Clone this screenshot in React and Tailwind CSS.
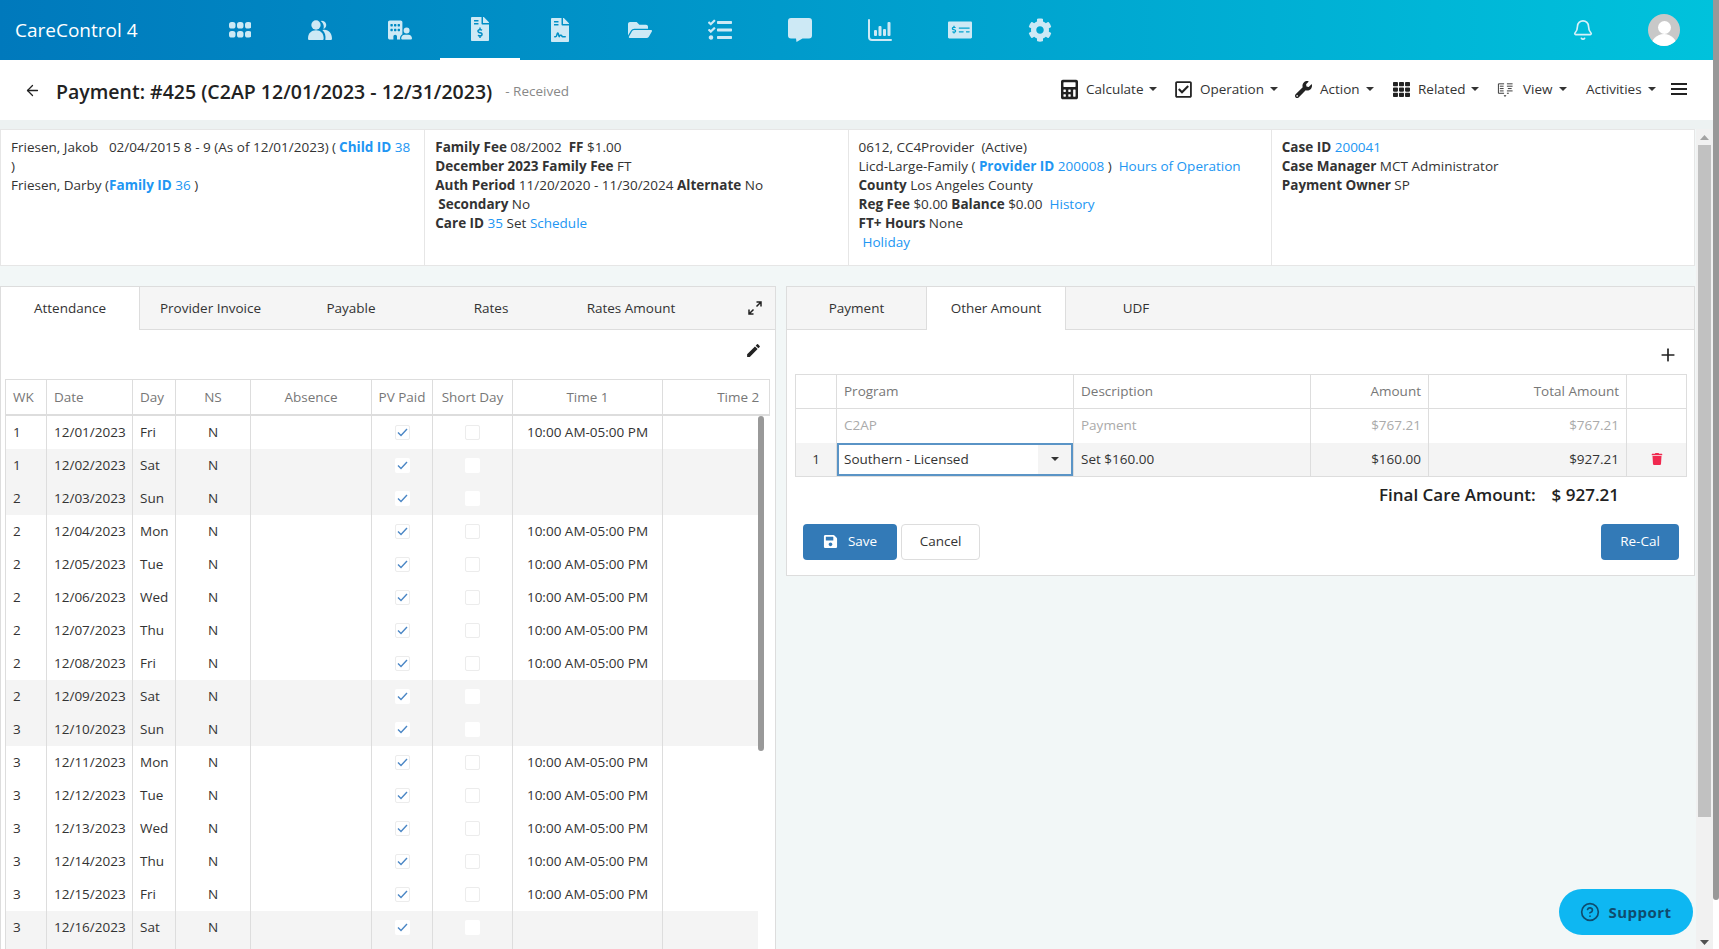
import React from 'react';
import { ArrowLeft, Bell, CircleHelp, Plus } from 'lucide-react';
import {
  FaCalculator, FaCog, FaFileContract, FaFileInvoiceDollar, FaFolderOpen,
  FaMoneyCheckAlt, FaRegCheckSquare, FaSave, FaTasks, FaTh, FaTrash, FaWrench,
} from 'react-icons/fa';
import { FaBuildingUser } from 'react-icons/fa6';
import { MdEdit } from 'react-icons/md';

const AppsIcon = () => (
  <svg width="22" height="16" viewBox="0 0 22 16" fill="currentColor">
    {[0, 8, 16].map((x) => [0, 9].map((y) => <rect key={`${x}-${y}`} x={x} y={y} width="6.500" height="6.500" rx="2.600" />))}
  </svg>
);

const PeopleIcon = () => (
  <svg width="24" height="20" viewBox="0 0 72 60" fill="currentColor">
    <circle cx="24" cy="15" r="14" />
    <path d="M0 56c0-16 10-25 24-25s23 9 23 25c0 2-2 4-4 4H4c-2 0-4-2-4-4z" />
    <path d="M38 3a11 11 0 1 1 8 24c3-7 1-18-8-24z" />
    <path d="M43 30c16-4 29 7 29 26 0 2-2 4-4 4H52c2-12-1-23-9-30z" />
  </svg>
);

const BubbleIcon = () => (
  <svg width="24" height="24" viewBox="0 0 24 24" fill="currentColor">
    <path d="M3 0h18a3 3 0 0 1 3 3v14.500a3 3 0 0 1-3 3h-6.500L8.500 24l-.5-3.500H3a3 3 0 0 1-3-3V3a3 3 0 0 1 3-3z" />
  </svg>
);

const BarsIcon = () => (
  <svg width="24" height="22" viewBox="0 0 24 22" fill="currentColor">
    <path d="M1 0a1 1 0 0 1 1 1v17a2 2 0 0 0 2 2h19a1 1 0 0 1 0 2H4a4 4 0 0 1-4-4V1a1 1 0 0 1 1-1z" />
    <rect x="6" y="11" width="3" height="6" rx="1" />
    <rect x="10.500" y="7" width="3" height="10" rx="1" />
    <rect x="15" y="10" width="3" height="7" rx="1" />
    <rect x="19.500" y="3" width="3" height="14" rx="1" />
  </svg>
);

const ViewIcon = () => (
  <svg width="18" height="17" viewBox="0 0 18 17" fill="none" stroke="#333" strokeWidth="1">
    <path d="M1.500 2.500h6M1.500 2.500v10h6M3 5h4M3 7.500h4M3 10h4" />
    <path d="M10.500 2.500h6M10.500 5h6M11.500 7.500h4M10.500 10h6M10.500 12.500h2" />
    <path d="M7 14.500h3l-1.500 2z" fill="#333" stroke="none" />
  </svg>
);

const ExpandIcon = () => (
  <svg width="14" height="14" viewBox="0 0 14 14" fill="none" stroke="#222" strokeWidth="1.500">
    <path d="M8.500 1h4.500v4.500M13 1L8.500 5.500" />
    <path d="M5.500 13H1V8.500M1 13l4.500-4.500" />
  </svg>
);

const Caret = ({ className = 'text-[#333]' }) => (
  <svg width="8" height="4" viewBox="0 0 8 4" fill="currentColor" className={className}>
    <path d="M0 0h8L4 4z" />
  </svg>
);

const navIcons = [
  <AppsIcon />,
  <PeopleIcon />,
  <FaBuildingUser size={24} />,
  <FaFileInvoiceDollar size={24} />,
  <FaFileContract size={24} />,
  <FaFolderOpen size={24} />,
  <FaTasks size={24} />,
  <BubbleIcon />,
  <BarsIcon />,
  <FaMoneyCheckAlt size={24} />,
  <FaCog size={24} />,
];

const toolbar = [
  { label: 'Calculate', icon: <FaCalculator size={21} />, mr: 'mr-[8px]', w: 'w-[114px]' },
  { label: 'Operation', icon: <FaRegCheckSquare size={19} />, mr: 'mr-[8px]', w: 'w-[120px]' },
  { label: 'Action', icon: <FaWrench size={19} />, mr: 'mr-[8px]', w: 'w-[98px]' },
  { label: 'Related', icon: <FaTh size={19} />, mr: 'mr-[8px]', w: 'w-[104px]' },
  { label: 'View', icon: <ViewIcon />, mr: 'mr-[9px]', w: 'w-[89px]' },
  { label: 'Activities', icon: null, mr: '', w: 'w-[85px]' },
];

const days = [
  [1, '12/01/2023', 'Fri'], [1, '12/02/2023', 'Sat'], [2, '12/03/2023', 'Sun'], [2, '12/04/2023', 'Mon'],
  [2, '12/05/2023', 'Tue'], [2, '12/06/2023', 'Wed'], [2, '12/07/2023', 'Thu'], [2, '12/08/2023', 'Fri'],
  [2, '12/09/2023', 'Sat'], [3, '12/10/2023', 'Sun'], [3, '12/11/2023', 'Mon'], [3, '12/12/2023', 'Tue'],
  [3, '12/13/2023', 'Wed'], [3, '12/14/2023', 'Thu'], [3, '12/15/2023', 'Fri'], [3, '12/16/2023', 'Sat'],
];

const AttendanceCols = () => (
  <colgroup>
    <col className="w-[41px]" />
    <col className="w-[86px]" />
    <col className="w-[43px]" />
    <col className="w-[75px]" />
    <col className="w-[121px]" />
    <col className="w-[61px]" />
    <col className="w-[80px]" />
    <col className="w-[150px]" />
    <col className="w-[151px]" />
  </colgroup>
);

const Link = ({ children, bold }) => (
  <span className={`text-[#2196f3] ${bold ? 'font-bold' : ''}`}>{children}</span>
);

const Check = ({ on, weekend }) => (
  <div className={`mx-auto flex h-[15px] w-[15px] items-center justify-center rounded-[2px] bg-white ${weekend ? '' : 'border border-[#ececec]'}`}>
    {on && (
      <svg width="11" height="9" viewBox="0 0 11 9" fill="none" stroke="#4a86c5" strokeWidth="1.400">
        <path d="M1 4.500l3 3L10 1" />
      </svg>
    )}
  </div>
);

function AttendancePanel() {
  const th = 'border-l border-[#ddd] font-normal text-[#777]';
  const td = 'border-l border-[#ddd]';
  return (
    <div className="h-[700px] w-[776px] shrink-0 border border-[#ddd] bg-white">
      <div className="flex h-[43px] items-stretch border-b border-[#ddd] bg-[#f5f5f5] pr-[13px]">
        <div className="-mb-px flex w-[139px] items-center justify-center border-r border-[#ddd] bg-white">Attendance</div>
        <div className="flex w-[141px] items-center justify-center">Provider Invoice</div>
        <div className="flex w-[140px] items-center justify-center">Payable</div>
        <div className="flex w-[140px] items-center justify-center">Rates</div>
        <div className="flex w-[140px] items-center justify-center">Rates Amount</div>
        <div className="flex flex-1 items-center justify-end">
          <ExpandIcon />
        </div>
      </div>
      <div className="flex h-[49px] items-start justify-end pt-[12px] pr-[13px]">
        <MdEdit size={17} className="text-[#222]" />
      </div>
      <div className="ml-[4px] w-[765px]">
        <div className="overflow-hidden border-t border-r border-[#ddd]">
          <table className="w-[808px] table-fixed border-collapse">
            <AttendanceCols />
            <thead>
              <tr className="h-[35px] border-b-2 border-[#ddd]">
                <th className={`${th} pl-[7px] text-left`}>WK</th>
                <th className={`${th} pl-[7px] text-left`}>Date</th>
                <th className={`${th} pl-[7px] text-left`}>Day</th>
                <th className={th}>NS</th>
                <th className={th}>Absence</th>
                <th className={`${th} whitespace-nowrap`}>PV Paid</th>
                <th className={`${th} whitespace-nowrap`}>Short Day</th>
                <th className={th}>Time 1</th>
                <th className={th}>Time 2</th>
              </tr>
            </thead>
          </table>
        </div>
        <div className="flex">
          <div className="w-[753px] overflow-hidden">
            <table className="w-[808px] table-fixed border-collapse">
              <AttendanceCols />
              <tbody>
                {days.map(([wk, date, day]) => {
                  const weekend = day === 'Sat' || day === 'Sun';
                  return (
                    <tr key={date} className={`h-[33px] ${weekend ? 'bg-[#f4f4f4]' : ''}`}>
                      <td className={`${td} pl-[7px]`}>{wk}</td>
                      <td className={`${td} pl-[7px]`}>{date}</td>
                      <td className={`${td} pl-[7px]`}>{day}</td>
                      <td className={`${td} text-center`}>N</td>
                      <td className={td} />
                      <td className={td}><Check on weekend={weekend} /></td>
                      <td className={td}><Check weekend={weekend} /></td>
                      <td className={`${td} text-center`}>{weekend ? '' : '10:00 AM-05:00 PM'}</td>
                      <td className={td} />
                    </tr>
                  );
                })}
                {/* next row, only its top edge is on screen */}
                <tr className="h-[33px] bg-[#f4f4f4]">
                  {[0, 1, 2, 3, 4, 5, 6, 7, 8].map((i) => <td key={i} className={td} />)}
                </tr>
              </tbody>
            </table>
          </div>
          <div className="h-[335px] w-[6px] rounded-[3px] bg-[#999]" />
        </div>
      </div>
    </div>
  );
}

function OtherAmountPanel() {
  const cell = 'border-l border-[#ddd] px-[7px]';
  return (
    <div className="h-[290px] w-[909px] shrink-0 border border-[#ddd] bg-white">
      <div className="flex h-[43px] items-stretch border-b border-[#ddd] bg-[#f5f5f5]">
        <div className="flex w-[139px] items-center justify-center">Payment</div>
        <div className="-mb-px flex w-[140px] items-center justify-center border-x border-[#ddd] bg-white">Other Amount</div>
        <div className="flex w-[140px] items-center justify-center">UDF</div>
      </div>
      <div className="flex h-[44px] items-start justify-end pt-[15px] pr-[16px]">
        <Plus size={20} strokeWidth={2} className="text-[#222]" />
      </div>
      <div className="mx-[8px]">
        <table className="w-[891px] table-fixed border-collapse border border-[#ddd]">
          <colgroup>
            <col className="w-[41px]" />
            <col className="w-[237px]" />
            <col className="w-[237px]" />
            <col className="w-[118px]" />
            <col className="w-[198px]" />
            <col className="w-[60px]" />
          </colgroup>
          <thead>
            <tr className="h-[34px] border-b border-[#ddd] text-[#777]">
              <th className="font-normal" />
              <th className={`${cell} text-left font-normal`}>Program</th>
              <th className={`${cell} text-left font-normal`}>Description</th>
              <th className={`${cell} text-right font-normal`}>Amount</th>
              <th className={`${cell} text-right font-normal`}>Total Amount</th>
              <th className={`${cell} font-normal`} />
            </tr>
          </thead>
          <tbody>
            <tr className="h-[34px] text-[#aaa]">
              <td />
              <td className={cell}>C2AP</td>
              <td className={cell}>Payment</td>
              <td className={`${cell} text-right`}>$767.21</td>
              <td className={`${cell} text-right`}>$767.21</td>
              <td className={cell} />
            </tr>
            <tr className="h-[33px] bg-[#f4f4f4]">
              <td className="text-center">1</td>
              <td className="border-l border-[#ddd] p-0">
                <div className="flex h-[33px] items-center justify-between border-2 border-[#5a94c6] bg-white pl-[5px]">
                  <span>Southern - Licensed</span>
                  <div className="flex h-full w-[33px] items-center justify-center bg-[#f4f4f4]">
                    <Caret className="text-[#333]" />
                  </div>
                </div>
              </td>
              <td className={cell}>Set $160.00</td>
              <td className={`${cell} text-right`}>$160.00</td>
              <td className={`${cell} text-right`}>$927.21</td>
              <td className={`${cell} text-center`}>
                <FaTrash size={12} className="mx-auto text-[#f0294f]" />
              </td>
            </tr>
          </tbody>
        </table>
        <div className="flex h-[35px] items-center justify-end gap-[16px] pr-[67px] text-[17px] font-semibold text-[#222]">
          <span>Final Care Amount:</span>
          <span>$ 927.21</span>
        </div>
      </div>
      <div className="mt-[12px] flex items-center pr-[15px] pl-[16px]">
        <button className="flex h-[36px] w-[94px] items-center justify-center gap-[10px] rounded-[4px] bg-[#337ab7] text-white">
          <FaSave size={15} />
          Save
        </button>
        <button className="ml-[4px] h-[36px] w-[79px] rounded-[4px] border border-[#ddd] bg-white">Cancel</button>
        <button className="ml-auto h-[36px] w-[78px] rounded-[4px] bg-[#337ab7] text-white">Re-Cal</button>
      </div>
    </div>
  );
}

export default function App() {
  return (
    <div className="relative flex h-screen overflow-hidden bg-white text-[13.5px] leading-[19px] text-[#333] [font-family:'Open_Sans',sans-serif]">
      <div className="flex w-[1713px] shrink-0 flex-col">
        {/* Top nav */}
        <header className="flex h-[60px] shrink-0 items-stretch bg-linear-to-r from-[#0079bc] to-[#00c2dc] text-white">
          <div className="flex w-[200px] items-center pl-[15px] text-[19px]">CareControl 4</div>
          <nav className="flex text-[#cde9f5]">
            {navIcons.map((icon, i) => (
              <div key={i} className={`flex w-[80px] items-center justify-center ${i === 3 ? 'border-b-2 border-white' : ''}`}>
                {icon}
              </div>
            ))}
          </nav>
          <div className="ml-auto flex items-center gap-[54px] pr-[33px]">
            <Bell size={22} strokeWidth={1.800} className="text-[#d8f1f9]" />
            <div className="relative h-[32px] w-[32px] overflow-hidden rounded-full bg-[#c8c8c8]">
              <div className="mx-auto mt-[7px] h-[13px] w-[13px] rounded-full bg-white" />
              <div className="absolute top-[20px] left-[3px] h-[26px] w-[26px] rounded-full bg-white" />
            </div>
          </div>
        </header>

        {/* Page title + actions */}
        <div className="flex h-[60px] shrink-0 items-center bg-white pl-[24px]">
          <ArrowLeft size={17} strokeWidth={1.800} className="text-[#222]" />
          <h1 className="mt-[2px] ml-[15px] text-[19.5px] font-semibold text-[#222]">Payment: #425 (C2AP 12/01/2023 - 12/31/2023)</h1>
          <span className="mt-[2px] ml-[13px] text-[#888]">- Received</span>
          <div className="ml-auto -mt-[2px] flex items-center">
            {toolbar.map((t) => (
              <div key={t.label} className={`flex items-center ${t.w}`}>
                {t.icon && <span className={`flex w-[17px] justify-center text-[#222] ${t.mr}`}>{t.icon}</span>}
                <span>{t.label}</span>
                <Caret className="ml-[6px] text-[#333]" />
              </div>
            ))}
            <div className="mr-[26px] flex h-[12px] w-[16px] flex-col justify-between">
              <div className="h-[2px] bg-[#222]" />
              <div className="h-[2px] bg-[#222]" />
              <div className="h-[2px] bg-[#222]" />
            </div>
          </div>
        </div>

        <div className="h-[9px] shrink-0 bg-[#edf2f2]" />

        <div className="flex min-h-0 flex-1">
          <main className="min-w-0 flex-1 overflow-hidden bg-[#f2f7f7]">
            {/* Summary strip */}
            <section className="grid h-[137px] w-[1695px] grid-cols-4 border border-[#e6e6e6] bg-white">
              <div className="py-[8px] pl-[10px]">
                <div className="whitespace-pre">Friesen, Jakob   02/04/2015 8 - 9 (As of 12/01/2023) (<span className="ml-[3px]"><Link bold>Child ID</Link></span> <Link>38</Link></div>
                <div>)</div>
                <div>Friesen, Darby (<Link bold>Family ID</Link> <Link>36</Link> )</div>
              </div>
              <div className="border-l border-[#e6e6e6] py-[8px] pl-[10px]">
                <div className="whitespace-pre"><b>Family Fee</b> 08/2002  <b>FF</b> $1.00</div>
                <div><b>December 2023 Family Fee</b> FT</div>
                <div><b>Auth Period</b> 11/20/2020 - 11/30/2024 <b>Alternate</b> No</div>
                <div className="pl-[3px]"><b>Secondary</b> No</div>
                <div><b>Care ID</b> <Link>35</Link> Set <Link>Schedule</Link></div>
              </div>
              <div className="border-l border-[#e6e6e6] py-[8px] pl-[10px]">
                <div className="whitespace-pre">0612, CC4Provider  (Active)</div>
                <div className="whitespace-pre">Licd-Large-Family ( <Link bold>Provider ID</Link> <Link>200008</Link> )  <Link>Hours of Operation</Link></div>
                <div><b>County</b> Los Angeles County</div>
                <div className="whitespace-pre"><b>Reg Fee</b> $0.00 <b>Balance</b> $0.00  <Link>History</Link></div>
                <div><b>FT+ Hours</b> None</div>
                <div className="pl-[4px]"><Link>Holiday</Link></div>
              </div>
              <div className="border-l border-[#e6e6e6] py-[8px] pl-[10px]">
                <div><b>Case ID</b> <Link>200041</Link></div>
                <div><b>Case Manager</b> MCT Administrator</div>
                <div><b>Payment Owner</b> SP</div>
              </div>
            </section>

            <div className="mt-[20px] flex items-start gap-[10px]">
              <AttendancePanel />
              <OtherAmountPanel />
            </div>
          </main>

          {/* Inner scrollbar */}
          <div className="flex w-[17px] shrink-0 flex-col items-center justify-between bg-[#f1f1f1]">
            <div className="flex w-full flex-col items-center">
              <svg width="9" height="5" viewBox="0 0 9 5" fill="#a3a3a3" className="mt-[6px]"><path d="M4.500 0L9 5H0z" /></svg>
              <div className="mt-[5px] h-[672px] w-[13px] bg-[#c1c1c1]" />
            </div>
            <svg width="9" height="5" viewBox="0 0 9 5" fill="#505050" className="mb-[4px]"><path d="M0 0h9L4.500 5z" /></svg>
          </div>
        </div>
      </div>

      {/* Page scrollbar */}
      <div className="w-[6px] shrink-0">
        <div className="h-[900px] rounded-b-[3px] bg-[#989898]" />
      </div>

      <button className="absolute top-[889px] left-[1559px] flex h-[46px] w-[134px] items-center justify-center gap-[8px] rounded-[23px] bg-[#0eb7f2] text-[15px] font-bold tracking-[0.5px] text-[#0f4c6e]">
        <CircleHelp size={20} strokeWidth={2} />
        Support
      </button>
    </div>
  );
}
